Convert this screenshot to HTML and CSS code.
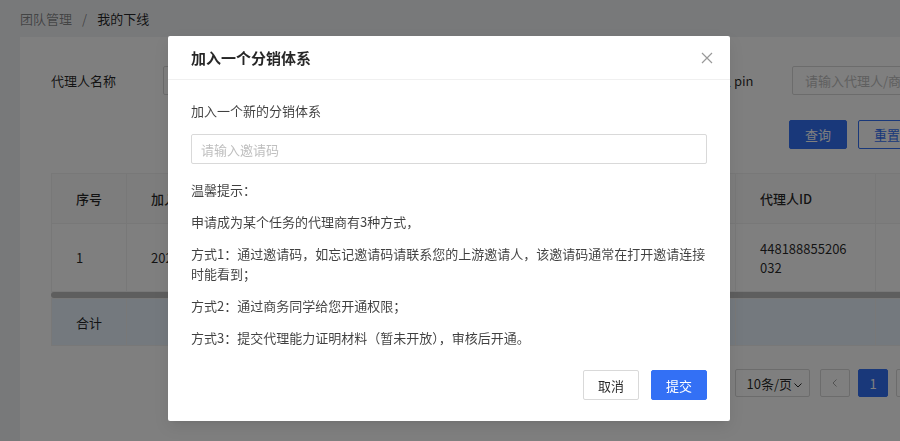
FILE: index.html
```html
<!DOCTYPE html>
<html lang="zh-CN">
<head>
    <meta charset="UTF-8">
    <meta name="viewport" content="width=device-width, initial-scale=1.0">
    <title>我的下线</title>
    <link rel="stylesheet" href="styles.css">
</head>
<body>
    <div class="page">
        <div class="breadcrumb">
            <span class="crumb-link">团队管理</span>
            <span class="crumb-sep">/</span>
            <span class="crumb-current">我的下线</span>
        </div>

        <div class="card">
            <div class="filter-row">
                <div class="form-item">
                    <label class="form-label">代理人名称</label>
                    <input class="text-input" type="text" placeholder="请输入代理人名称">
                </div>
                <div class="form-item">
                    <label class="form-label">代理人状态</label>
                    <input class="text-input" type="text" placeholder="请选择">
                </div>
                <div class="form-item">
                    <label class="form-label form-label-short">代理人 pin</label>
                    <input class="text-input" type="text" placeholder="请输入代理人/商家pin">
                </div>
            </div>

            <div class="action-row">
                <button class="btn btn-primary">查询</button>
                <button class="btn btn-outline">重置</button>
            </div>

            <div class="table-wrap">
                <table class="data-table">
                    <colgroup>
                        <col style="width: 75px">
                        <col style="width: 170px">
                        <col style="width: 220px">
                        <col style="width: 219px">
                        <col style="width: 140px">
                        <col style="width: 180px">
                    </colgroup>
                    <thead>
                        <tr>
                            <th>序号</th>
                            <th>加入时间</th>
                            <th>代理人名称</th>
                            <th>代理人pin</th>
                            <th>代理人ID</th>
                            <th>状态</th>
                        </tr>
                    </thead>
                    <tbody>
                        <tr>
                            <td>1</td>
                            <td>2021-06-18 10:22:31</td>
                            <td>测试代理人</td>
                            <td>test_pin</td>
                            <td class="wrap">448188855206032</td>
                            <td>正常</td>
                        </tr>
                    </tbody>
                </table>
                <div class="scrollbar"><div class="scrollbar-thumb"></div></div>
                <table class="data-table summary">
                    <colgroup>
                        <col style="width: 75px">
                        <col style="width: 170px">
                        <col style="width: 220px">
                        <col style="width: 219px">
                        <col style="width: 140px">
                        <col style="width: 180px">
                    </colgroup>
                    <tr>
                        <td>合计</td>
                        <td></td>
                        <td></td>
                        <td></td>
                        <td></td>
                        <td></td>
                    </tr>
                </table>
            </div>

            <div class="pagination">
                <div class="page-size">10条/页<svg width="10" height="10" viewBox="0 0 10 10"><path d="M1.5 3.5 L5 7 L8.5 3.5" fill="none" stroke="currentColor" stroke-width="1"/></svg></div>
                <div class="page-btn"><svg width="10" height="10" viewBox="0 0 10 10"><path d="M6.5 1.5 L3 5 L6.5 8.5" fill="none" stroke="currentColor" stroke-width="1"/></svg></div>
                <div class="page-btn active">1</div>
                <div class="page-btn"><svg width="10" height="10" viewBox="0 0 10 10"><path d="M3.5 1.5 L7 5 L3.5 8.5" fill="none" stroke="currentColor" stroke-width="1"/></svg></div>
            </div>
        </div>
    </div>

    <div class="mask"></div>

    <div class="modal">
        <div class="modal-header">
            <span class="modal-title">加入一个分销体系</span>
            <svg class="modal-close" width="12" height="12" viewBox="0 0 12 12">
                <path d="M1 1 L11 11 M11 1 L1 11" stroke="currentColor" stroke-width="1.2" fill="none"/>
            </svg>
        </div>
        <div class="modal-body">
            <p class="modal-sub">加入一个新的分销体系</p>
            <input class="text-input code-input" type="text" placeholder="请输入邀请码">
            <div class="tips">
                <p>温馨提示：</p>
                <p>申请成为某个任务的代理商有3种方式，</p>
                <p>方式1：通过邀请码，如忘记邀请码请联系您的上游邀请人，该邀请码通常在打开邀请连接时能看到；</p>
                <p>方式2：通过商务同学给您开通权限；</p>
                <p>方式3：提交代理能力证明材料（暂未开放），审核后开通。</p>
            </div>
            <div class="modal-footer">
                <button class="btn btn-default">取消</button>
                <button class="btn btn-primary">提交</button>
            </div>
        </div>
    </div>
</body>
</html>
```

FILE: styles.css
```css
body {
    margin: 0;
    font-family: "Noto Sans CJK SC", "Noto Sans", sans-serif;
    font-size: 13px;
    color: rgba(0,0,0,0.85);
    background-color: #f0f2f5;
    overflow: hidden;
}
p {
    margin: 0;
}
.page {
    width: 1000px;
}
.breadcrumb {
    height: 37px;
    padding-left: 20px;
    display: flex;
    align-items: center;
    gap: 10px;
    line-height: 1;
}
.crumb-link {
    color: rgba(0,0,0,0.45);
}
.crumb-sep {
    color: rgba(0,0,0,0.45);
}
.crumb-current {
    color: rgba(0,0,0,0.85);
}
.card {
    background-color: white;
    margin-left: 20px;
    width: 936px;
    box-sizing: border-box;
    padding: 29px 40px 30px 31px;
    height: 420px;
}
.filter-row {
    display: flex;
}
.form-item {
    display: flex;
    align-items: center;
    flex-shrink: 0;
    width: 342px;
}
.form-item:nth-child(2) {
    width: 299px;
}
.form-label {
    width: 112px;
    flex-shrink: 0;
}
.form-label-short {
    width: 100px;
}
.text-input {
    height: 29px;
    box-sizing: border-box;
    border: 1px solid #d9d9d9;
    border-radius: 2px;
    padding: 0 12px;
    font-family: inherit;
    font-size: 13px;
    width: 100%;
    outline: none;
    color: rgba(0,0,0,0.85);
}
.text-input::placeholder {
    color: #bfbfbf;
}
.action-row {
    display: flex;
    justify-content: flex-end;
    gap: 11px;
    margin-top: 25px;
}
.btn {
    height: 29px;
    padding: 0 15px;
    font-family: inherit;
    font-size: 13px;
    border-radius: 2px;
    border: 1px solid #d9d9d9;
    background-color: white;
    color: rgba(0,0,0,0.85);
    cursor: pointer;
}
.btn-primary {
    background-color: #3370f5;
    border-color: #3370f5;
    color: white;
}
.btn-outline {
    border-color: #3370f5;
    color: #3370f5;
}
.table-wrap {
    margin-top: 24px;
    overflow: hidden;
}
.data-table {
    border-collapse: collapse;
    table-layout: fixed;
    width: 1004px;
}
.data-table th,
.data-table td {
    text-align: left;
    padding: 0 24px;
    border: 1px solid #f0f0f0;
    line-height: 19px;
}
.data-table th {
    background-color: #fafafa;
    font-weight: 500;
    height: 49px;
}
.data-table td {
    height: 67px;
}
.data-table .wrap {
    word-break: break-all;
}
.scrollbar {
    height: 6px;
    width: 1004px;
    background-color: #f5f5f5;
}
.scrollbar-thumb {
    height: 6px;
    width: 900px;
    background-color: #bcbcbc;
    border-radius: 3px;
}
.summary td {
    background-color: #e8f2fc;
    height: 46px;
}
.pagination {
    display: flex;
    justify-content: flex-end;
    align-items: center;
    gap: 8px;
    margin-top: 23px;
    margin-right: -10px;
}
.page-size {
    height: 28px;
    width: 75px;
    box-sizing: border-box;
    border: 1px solid #d9d9d9;
    border-radius: 2px;
    display: flex;
    align-items: center;
    justify-content: flex-end;
    padding-right: 6px;
    margin-right: 2px;
}
.page-size svg {
    margin-left: 1px;
    margin-top: 3px;
}
.page-btn {
    width: 30px;
    height: 28px;
    box-sizing: border-box;
    border: 1px solid #d9d9d9;
    border-radius: 2px;
    display: flex;
    align-items: center;
    justify-content: center;
    color: rgba(0,0,0,0.35);
}
.page-btn.active {
    background-color: #3370f5;
    border-color: #3370f5;
    color: white;
}
.mask {
    position: fixed;
    inset: 0;
    background-color: rgba(0,0,0,0.5);
}
.modal {
    position: absolute;
    top: 36px;
    left: 168px;
    width: 562px;
    background-color: white;
    border-radius: 2px;
    box-shadow: 0 3px 6px -4px rgba(0,0,0,0.12), 0 6px 16px rgba(0,0,0,0.08);
}
.modal-header {
    height: 43px;
    padding: 0 17px 0 23px;
    display: flex;
    align-items: center;
    justify-content: space-between;
    border-bottom: 1px solid #f0f0f0;
}
.modal-title {
    font-size: 15px;
    font-weight: 600;
    color: rgba(0,0,0,0.85);
}
.modal-close {
    color: rgba(0,0,0,0.4);
}
.modal-body {
    padding: 21px 23px 21px;
    color: rgba(0,0,0,0.75);
    line-height: 20px;
}
.code-input {
    display: block;
    height: 30px;
    margin-top: 13px;
    padding: 0 9px;
}
.tips {
    margin-top: 16px;
    display: flex;
    flex-direction: column;
    gap: 12px;
}
.modal-footer {
    display: flex;
    justify-content: flex-end;
    gap: 12px;
    margin-top: 22px;
}
.modal-footer .btn {
    height: 30px;
    padding: 0 14px;
}
```
